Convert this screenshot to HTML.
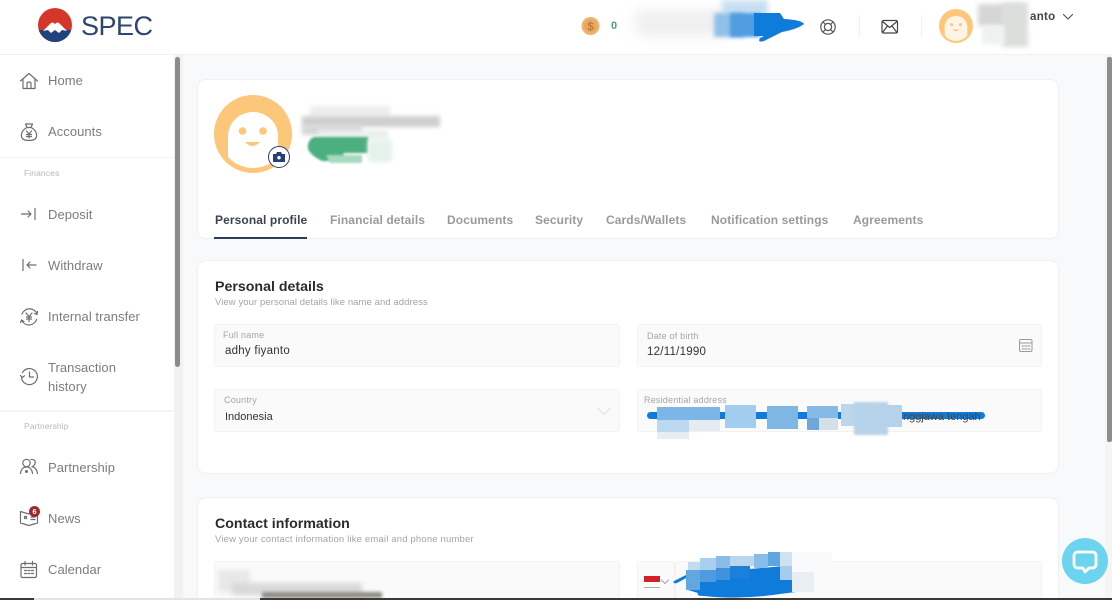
<!DOCTYPE html>
<html><head><meta charset="utf-8">
<style>
html,body{margin:0;padding:0;width:1112px;height:600px;overflow:hidden;background:#f8f9fb;font-family:"Liberation Sans",sans-serif}
.a{position:absolute}
#r{position:relative;width:1112px;height:600px;overflow:hidden}
.t{position:absolute;white-space:nowrap}
.nav{position:absolute;left:48px;font-size:13px;color:#7c7c7c;letter-spacing:.05px;white-space:nowrap;line-height:19px}
.sec{position:absolute;left:24px;font-size:8.5px;color:#b9b9b9;letter-spacing:.1px}
.card{position:absolute;background:#fff;border:1px solid #eef0f2;border-radius:9px;box-sizing:border-box}
.f{position:absolute;background:#fafafa;border:1px solid #f2f2f3;border-radius:3px;box-sizing:border-box}
.lb{position:absolute;font-size:9px;color:#a5a5a5;letter-spacing:.2px;white-space:nowrap}
.v{position:absolute;font-size:11.5px;color:#333;letter-spacing:.25px;white-space:nowrap}
.tab{position:absolute;top:213px;font-size:12px;font-weight:bold;color:#9a9a9a;letter-spacing:.1px;white-space:nowrap}
.h2{position:absolute;white-space:nowrap;font-size:14.2px;font-weight:bold;color:#2b2b2b}
.ic{position:absolute;fill:none;stroke:#6e6e6e;stroke-width:1.2;stroke-linecap:round;stroke-linejoin:round}
.b{position:absolute}
</style></head>
<body><div id="r">
<!-- top header -->
<div class="a" style="left:0;top:0;width:1112px;height:54px;background:#fff;border-bottom:1px solid #f1f2f3"></div>
<svg class="a" style="left:37px;top:7px" width="36" height="36" viewBox="0 0 36 36">
<defs><clipPath id="c"><circle cx="18" cy="18" r="17"/></clipPath></defs>
<g clip-path="url(#c)"><rect width="36" height="36" fill="#d5362b"/><rect y="23" width="36" height="13" fill="#22427c"/>
<path d="M6 24 L14 16 L16 15.500 L18 17 L20 15.500 L22 16 L30 24 L25 23 L22 26 L18 23 L14 26 L11 23Z" fill="#fff"/></g></svg>
<div class="t" style="left:81px;top:9px;font-size:27px;line-height:34px;color:#2d4570;letter-spacing:-.5px">SPEC</div>
<svg class="a" style="left:580px;top:16px" width="20" height="20"><circle cx="10.500" cy="10" r="9" fill="#eeb36c"/><circle cx="10.500" cy="10" r="6.500" fill="#e8a862"/><text x="10.500" y="14" font-size="11" font-family="Liberation Sans" text-anchor="middle" fill="#b06f2c">$</text></svg>
<div class="t" style="left:611px;top:20px;font-size:11px;font-weight:bold;color:#4aa279">0</div>
<div class="a" style="left:636px;top:10px;width:90px;height:26px;background:#efefef;filter:blur(6px)"></div>
<div class="a" style="left:722px;top:0;width:46px;height:16px;background:#c8dff2;filter:blur(3px)"></div>
<div class="a" style="left:714px;top:13px;width:30px;height:24px;background:#8fc0e8;filter:blur(2px)"></div>
<div class="a" style="left:730px;top:13px;width:30px;height:24px;background:#4f9de0;filter:blur(1.500px)"></div>
<svg class="a" style="left:740px;top:10px" width="68" height="36"><path d="M14 3 L40 3 L44 9 Q62 10 64 14 Q58 19 42 22 L24 31 Q17 33 20 28 L24 26 L14 26Z" fill="#0f7bdb"/></svg>
<svg class="ic" style="left:818px;top:17px" width="20" height="20" viewBox="0 0 20 20"><g stroke="#555"><circle cx="10" cy="10" r="7.200"/><circle cx="10" cy="10" r="3.600"/><path d="M5 5l2.500 2.500M15 5l-2.500 2.500M5 15l2.500-2.500M15 15l-2.500-2.500"/></g></svg>
<div class="a" style="left:859px;top:15px;width:1px;height:22px;background:#f0f0f0"></div>
<svg class="ic" style="left:880px;top:18px" width="20" height="18" viewBox="0 0 20 18"><g stroke="#444"><rect x="2" y="2.500" width="15.500" height="12.500" rx="1.500"/><path d="M2.500 3.500L9.700 9.500 17 3.500M2.500 14.500L7.500 8M17 14.500L12 8"/></g></svg>
<div class="a" style="left:921px;top:15px;width:1px;height:22px;background:#f0f0f0"></div>
<svg class="a" style="left:939px;top:9px" width="34" height="34" viewBox="0 0 78 78"><defs><clipPath id="av1"><circle cx="39" cy="39" r="34"/></clipPath></defs><circle cx="39" cy="39" r="39" fill="#fcc67b"/><path clip-path="url(#av1)" d="M13 80 V41 A26 25 0 0 1 65 41 V80 Z" fill="#fff5e7"/><circle cx="29" cy="36" r="3.500" fill="#fcc67b"/><circle cx="49" cy="36" r="3.500" fill="#fcc67b"/><path d="M31 47h15q-7.500 8-15 0z" fill="#fcc67b"/></svg>
<div class="t" style="left:1030px;top:11px;font-size:11.5px;font-weight:bold;color:#444;letter-spacing:.3px">anto</div>
<div class="a" style="left:978px;top:4px;width:46px;height:22px;background:#d6d6d6;filter:blur(2.500px)"></div>
<div class="a" style="left:1002px;top:3px;width:26px;height:44px;background:#dbdfdc;filter:blur(2.500px)"></div>
<div class="a" style="left:982px;top:26px;width:22px;height:18px;background:#edf2ef;filter:blur(2px)"></div>
<svg class="ic" style="left:1061px;top:12px" width="14" height="10"><path d="M2.500 2.500L7 7l4.500-4.500" stroke="#555"/></svg>

<!-- sidebar -->
<div class="a" style="left:0;top:55px;width:174px;height:545px;background:#fff"></div>
<div class="a" style="left:174px;top:55px;width:9px;height:545px;background:#f1f1f1"></div>
<div class="a" style="left:175px;top:57px;width:5px;height:310px;background:#8b8b8b;border-radius:3px"></div>
<div class="a" style="left:0;top:157px;width:174px;height:1px;background:#f1f2f3"></div>
<div class="a" style="left:0;top:410px;width:174px;height:2px;background:#f3f4f5"></div>
<div class="nav" style="top:71px">Home</div>
<div class="nav" style="top:122px">Accounts</div>
<div class="sec" style="top:168px">Finances</div>
<div class="nav" style="top:205px">Deposit</div>
<div class="nav" style="top:256px">Withdraw</div>
<div class="nav" style="top:307px">Internal transfer</div>
<div class="nav" style="top:358px">Transaction</div>
<div class="nav" style="top:377px">history</div>
<div class="sec" style="top:421px">Partnership</div>
<div class="nav" style="top:458px">Partnership</div>
<div class="nav" style="top:509px">News</div>
<div class="nav" style="top:560px">Calendar</div>

<svg class="ic" style="left:19px;top:71px" width="20" height="20" viewBox="0 0 20 20"><path d="M1.500 10L10 2.500 18.500 10M4 8.500V17.500H16V8.500M8 17.500V12.500Q8 11 10 11T12 12.500V17.500"/></svg>
<svg class="ic" style="left:20px;top:122px" width="18" height="20" viewBox="0 0 18 20"><path d="M5.500 2h7L11 5.500H7zM7 5.500C2 8 1 12 1.500 14.500 2 17.500 5 18.500 9 18.500s7-1 7.500-4C17 12 16 8 11 5.500M6.500 9L9 12l2.500-3M9 12v4M6.500 12.500h5M6.500 14.500h5"/></svg>
<svg class="ic" style="left:20px;top:206px" width="18" height="16" viewBox="0 0 18 16"><path d="M1.500 8h9M8 5l3 3-3 3M15 2.500v11"/></svg>
<svg class="ic" style="left:20px;top:257px" width="18" height="16" viewBox="0 0 18 16"><path d="M3 2.500v11M16 8H7M10 5L7 8l3 3"/></svg>
<svg class="ic" style="left:19px;top:307px" width="20" height="20" viewBox="0 0 20 20"><path d="M3 7A8 8 0 0 1 18 7M17.500 12.500A8 8 0 0 1 3 14M18.500 4.500L18 7.500 15.500 6.500M1.500 15.500L2.500 13 5 14.500M7 6l3 3.500L13 6M10 9.500V14.500M7.500 10h5M7.500 12h5"/></svg>
<svg class="ic" style="left:19px;top:366px" width="20" height="20" viewBox="0 0 20 20"><path d="M3.500 6.500A8 8 0 1 1 2.500 12M1.500 9.500L3.300 11.500 5.500 9.800M10.500 6V11H14.500"/></svg>
<svg class="ic" style="left:19px;top:458px" width="20" height="18" viewBox="0 0 20 18"><circle cx="7.500" cy="5" r="3.700"/><path d="M1.500 15.500C2 11 4.500 9 7.500 9s5.500 2 6 6.500M12 1.500c3-.5 4.500 1.500 4.200 3.500S14 8.500 13 8.700c3 .5 5 3 5.500 6.800"/><circle cx="7.500" cy="13.500" r=".9" fill="#6e6e6e"/></svg>
<svg class="ic" style="left:19px;top:509px" width="20" height="18" viewBox="0 0 20 18"><path d="M1.500 2.500L10 5l8.500-2.500V14L10 16.500 1.500 14zM5.500 7.500h2v2h-2zM12 8h4M12 10.500h4"/></svg>
<div class="a" style="left:29px;top:506px;width:11px;height:11px;border-radius:50%;background:#a0282a;color:#fff;font-size:7.500px;font-weight:bold;line-height:11px;text-align:center">6</div>
<svg class="ic" style="left:19px;top:560px" width="20" height="20" viewBox="0 0 20 20"><rect x="2" y="3.500" width="15.500" height="14" rx="1.500"/><path d="M2 7.500h15.500M6 1.500v3.500M13.500 1.500v3.500M5.500 10.500h2M9 10.500h2M12.500 10.500h2M5.500 13.500h2M9 13.500h2M12.500 13.500h2"/></svg>

<!-- right scrollbar -->
<div class="a" style="left:1105px;top:55px;width:7px;height:545px;background:#f5f5f5"></div>
<div class="a" style="left:1107px;top:57px;width:5px;height:385px;background:#8d8d8d;border-radius:2px"></div>

<!-- profile card -->
<div class="card" style="left:197px;top:79px;width:862px;height:160px"></div>
<svg class="a" style="left:214px;top:95px" width="78" height="78" viewBox="0 0 78 78"><defs><clipPath id="av2"><circle cx="39" cy="39" r="34"/></clipPath></defs><circle cx="39" cy="39" r="39" fill="#fcc67b"/><path clip-path="url(#av2)" d="M14 80 V41 A25 24 0 0 1 64 41 V80 Z" fill="#fff"/><circle cx="28.500" cy="36" r="3.800" fill="#fcc67b"/><circle cx="49" cy="36" r="3.800" fill="#fcc67b"/><path d="M31 47h15q-7.500 8-15 0z" fill="#fcc67b"/></svg>
<div class="a" style="left:268px;top:146px;width:20px;height:20px;border-radius:50%;background:#fff;border:1px solid #2b3e66"></div>
<svg class="a" style="left:272px;top:151px" width="14" height="12"><path d="M1 3h3l1-2h4l1 2h3v8H1z" fill="#23407a"/><circle cx="7" cy="6.700" r="1.700" fill="#fff"/></svg>
<!-- blurred name -->
<div class="a" style="left:310px;top:106px;width:80px;height:10px;background:#ededed;filter:blur(2px)"></div>
<div class="a" style="left:302px;top:116px;width:138px;height:11px;background:#cfcfcf;filter:blur(2px)"></div>
<div class="a" style="left:302px;top:125px;width:60px;height:10px;background:#d6d6d6;filter:blur(2px)"></div>
<div class="a" style="left:318px;top:130px;width:70px;height:10px;background:#eaf0ec;filter:blur(2px)"></div>
<svg class="a" style="left:306px;top:135px;filter:blur(1px)" width="70" height="32"><path d="M8 2h54v16H38l-4 8H16Q0 18 2 10Q3 4 8 2z" fill="#4caf7f"/><path d="M20 20h36v8H24z" fill="#a6d9be"/></svg>
<div class="a" style="left:368px;top:140px;width:24px;height:22px;background:#e5f1eb;filter:blur(2.500px)"></div>
<!-- tabs -->
<div class="tab" style="left:215px;color:#3b4255">Personal profile</div>
<div class="tab" style="left:330px">Financial details</div>
<div class="tab" style="left:447px">Documents</div>
<div class="tab" style="left:535px">Security</div>
<div class="tab" style="left:606px">Cards/Wallets</div>
<div class="tab" style="left:711px">Notification settings</div>
<div class="tab" style="left:853px">Agreements</div>
<div class="a" style="left:214px;top:237px;width:93px;height:2px;background:#2d3b5c"></div>

<!-- personal details -->
<div class="card" style="left:197px;top:260px;width:862px;height:214px"></div>
<div class="h2" style="left:215px;top:279px">Personal details</div>
<div class="t" style="left:215px;top:297px;font-size:9.500px;color:#a4a4a4;letter-spacing:.08px">View your personal details like name and address</div>
<div class="f" style="left:214px;top:324px;width:406px;height:43px"></div>
<div class="lb" style="left:223px;top:330px">Full name</div>
<div class="v" style="left:225px;top:345px">adhy fiyanto</div>
<div class="f" style="left:637px;top:324px;width:405px;height:43px"></div>
<div class="lb" style="left:647px;top:331px">Date of birth</div>
<div class="v" style="left:647px;top:346px">12/11/1990</div>
<svg class="ic" style="left:1018px;top:338px" width="16" height="15" viewBox="0 0 16 15"><g stroke="#9a9a9a" stroke-width="1"><rect x="1.500" y="1.500" width="12.500" height="12" rx="1.500"/><path d="M1.500 5h12.500M4 8h2M7 8h2M10 8h2M4 11h2M7 11h2M10 11h2"/></g></svg>
<div class="f" style="left:214px;top:389px;width:406px;height:43px"></div>
<div class="lb" style="left:224px;top:395px">Country</div>
<div class="v" style="left:225px;top:411px;letter-spacing:0;font-size:11px">Indonesia</div>
<svg class="ic" style="left:597px;top:407px" width="14" height="10"><path d="M1 1.500L7 7.500 13 1.500" stroke="#e4e4e4"/></svg>
<div class="f" style="left:637px;top:389px;width:405px;height:43px"></div>
<div class="lb" style="left:644px;top:395px">Residential address</div>
<!-- address scribble -->
<div class="a" style="left:647px;top:412px;width:338px;height:7px;background:#0f7bdb;border-radius:4px"></div>
<div class="v" style="left:903px;top:411px;color:#444;font-size:11px;letter-spacing:0">nggjawa tengah</div>
<div class="b" style="left:657px;top:407px;width:63px;height:13px;background:#7db6e6"></div>
<div class="b" style="left:657px;top:420px;width:32px;height:12px;background:#bcd9f0"></div>
<div class="b" style="left:657px;top:432px;width:32px;height:7px;background:#e6eef5"></div>
<div class="b" style="left:689px;top:420px;width:31px;height:11px;background:#e4ebf1"></div>
<div class="b" style="left:725px;top:405px;width:31px;height:23px;background:#a3cdee"></div>
<div class="b" style="left:767px;top:406px;width:31px;height:23px;background:#80b6e4"></div>
<div class="b" style="left:807px;top:406px;width:31px;height:12px;background:#86bae6"></div>
<div class="b" style="left:807px;top:418px;width:12px;height:12px;background:#6ea8d8"></div>
<div class="b" style="left:819px;top:418px;width:19px;height:12px;background:#d5dfe7"></div>
<div class="b" style="left:841px;top:404px;width:30px;height:22px;background:#bcd7ec"></div>
<div class="b" style="left:854px;top:402px;width:34px;height:33px;background:#b7d3ea;filter:blur(1px)"></div>
<div class="b" style="left:880px;top:405px;width:22px;height:22px;background:#b5d2ea"></div>

<!-- contact -->
<div class="card" style="left:197px;top:497px;width:862px;height:120px"></div>
<div class="h2" style="left:215px;top:516px">Contact information</div>
<div class="t" style="left:215px;top:534px;font-size:9.500px;color:#a4a4a4;letter-spacing:.17px">View your contact information like email and phone number</div>
<div class="f" style="left:214px;top:561px;width:406px;height:50px"></div>
<div class="a" style="left:218px;top:570px;width:32px;height:22px;background:#e8e8e8;filter:blur(2.500px)"></div>
<div class="a" style="left:232px;top:583px;width:130px;height:12px;background:#d9d9d9;filter:blur(2.500px)"></div>
<div class="a" style="left:262px;top:592px;width:120px;height:6px;background:#8f8c88;filter:blur(1.500px)"></div>
<div class="f" style="left:637px;top:561px;width:38px;height:50px"></div>
<div class="f" style="left:675px;top:561px;width:367px;height:50px"></div>
<div class="a" style="left:644px;top:576px;width:16px;height:6px;background:#d5202c"></div>
<div class="a" style="left:644px;top:582px;width:16px;height:6px;background:#fafafa;border-bottom:1px solid #aaa;box-sizing:border-box"></div>
<svg class="ic" style="left:660px;top:578px" width="10" height="8"><path d="M1.500 2L5 5.500 8.500 2" stroke="#aaa"/></svg>
<!-- phone scribble: coordinates relative to 670,550 -->
<svg class="a" style="left:670px;top:550px" width="190" height="50"><path d="M4 31 Q2 34 7 33 L18 27 V40 L28 43 Q26 46 34 46 Q70 50 110 44 L134 41 L130 34 L115 16 L18 24Z" fill="#0f7bdb"/>
<rect x="18" y="12" width="12" height="12" fill="#c4dcf1"/><rect x="30" y="8" width="16" height="12" fill="#a9cfee"/><rect x="46" y="6" width="14" height="12" fill="#8bbce8"/><rect x="60" y="6" width="24" height="10" fill="#b9d6ef"/><rect x="84" y="4" width="14" height="14" fill="#8abce8"/><rect x="98" y="2" width="12" height="14" fill="#5ea6e2"/><rect x="110" y="2" width="12" height="14" fill="#cfe2f2"/><rect x="16" y="20" width="14" height="20" fill="#63a7e0"/><rect x="30" y="20" width="16" height="12" fill="#4e9be0"/><rect x="46" y="18" width="14" height="12" fill="#3f93de"/><rect x="60" y="16" width="20" height="12" fill="#1c80db"/><rect x="110" y="16" width="12" height="14" fill="#a4cdec"/><rect x="122" y="2" width="40" height="20" fill="#f7f9fa"/><rect x="122" y="22" width="22" height="20" fill="#e8eef3"/></svg>

<!-- bottom taskbar strip -->
<div class="a" style="left:0;top:598px;width:1112px;height:2px;background:#3b3835"></div>
<div class="a" style="left:34px;top:598px;width:226px;height:2px;background:#e4e4e4"></div>

<!-- chat -->
<div class="a" style="left:1062px;top:538px;width:46px;height:46px;border-radius:50%;background:#6cd4ee"></div>
<svg class="a" style="left:1071px;top:549px" width="28" height="26" viewBox="0 0 28 26"><path d="M7 3h14q4 0 4 4v8q0 4-4 4h-3l-4 4-2-4H7q-4 0-4-4V7q0-4 4-4z" fill="none" stroke="#fff" stroke-width="2.800" stroke-linejoin="round"/></svg>
</div></body></html>
